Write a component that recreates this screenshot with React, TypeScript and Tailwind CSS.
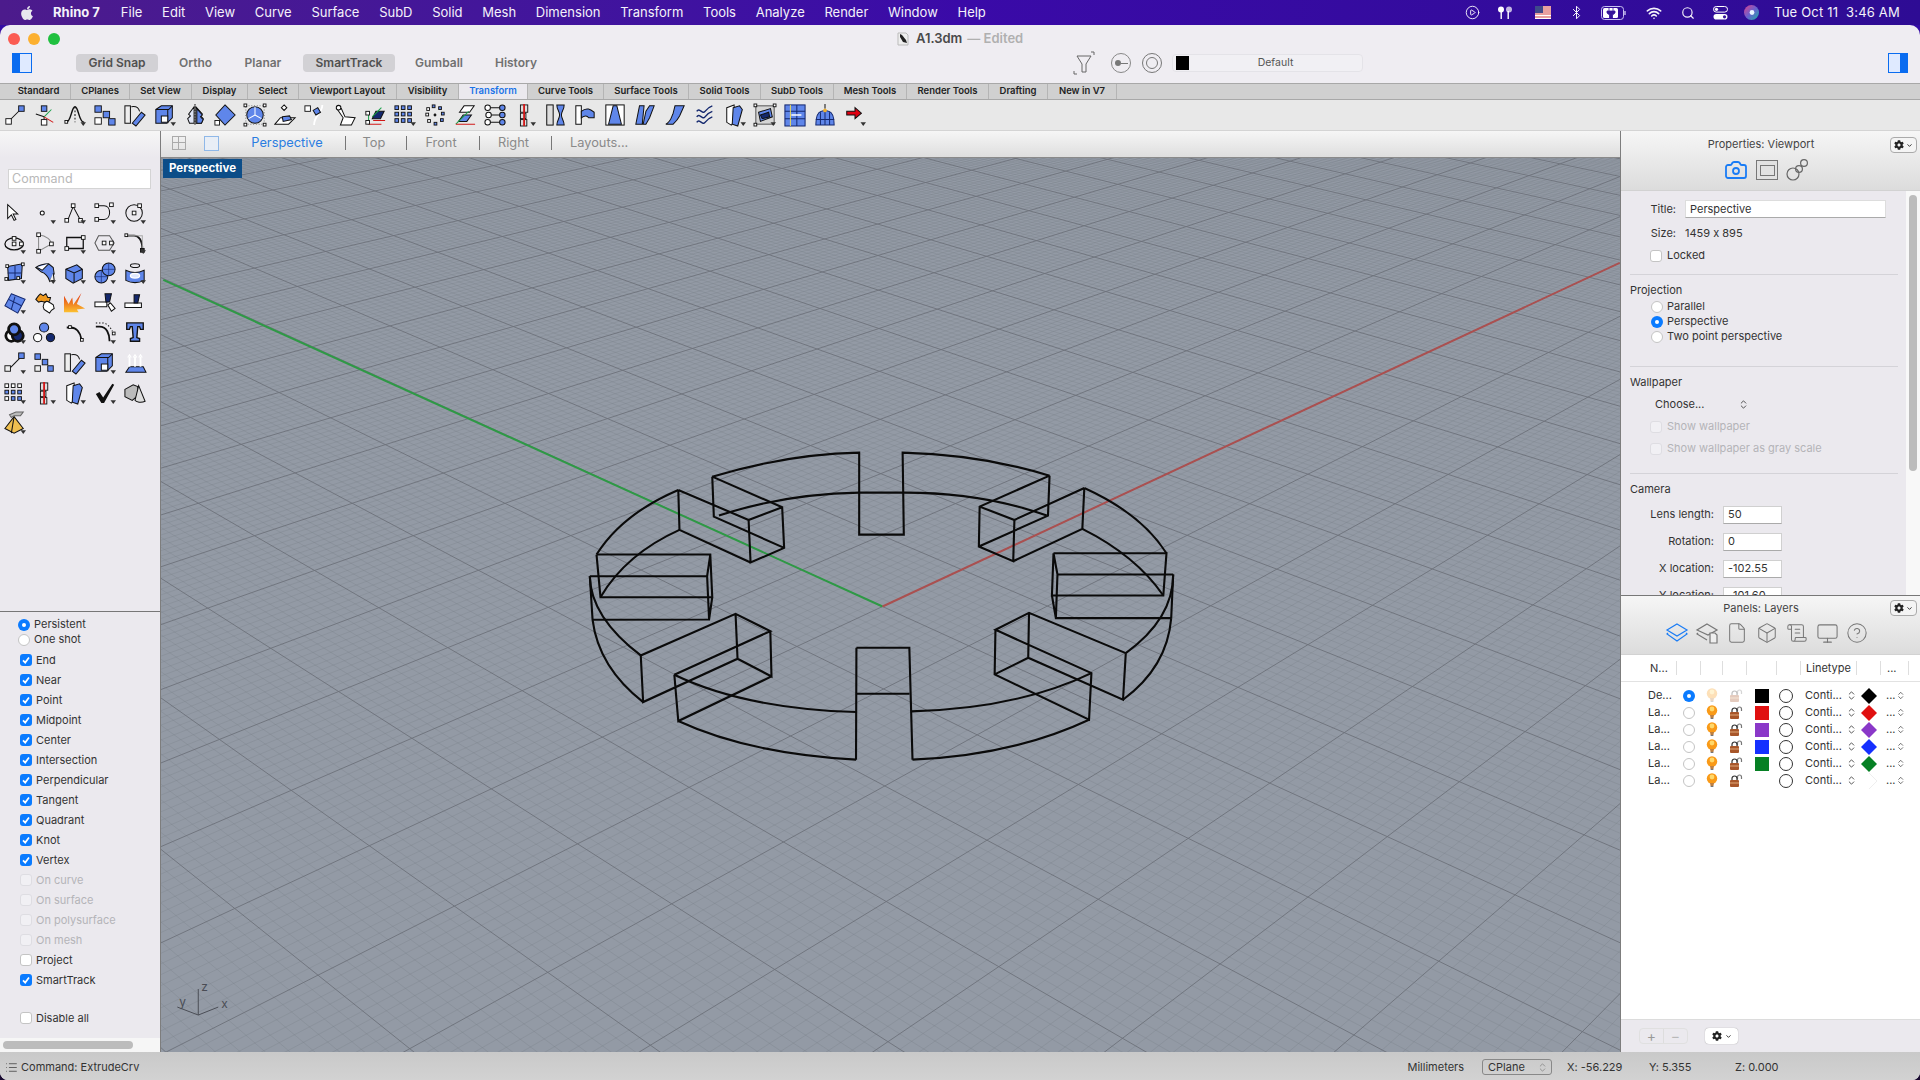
import type { ReactNode } from "react";
import { FaApple, FaCog } from "react-icons/fa";
import {
  Bluetooth,
  Box,
  Camera,
  ChevronDown,
  ChevronsUpDown,
  CircleHelp,
  CirclePlay,
  File,
  List,
  Monitor,
  ScrollText,
  Search,
  Wifi,
} from "lucide-react";

const K = "#111";
const BL = "#5f86ea";
const DK = "#14286e";

function Sq({ x, y, s = 5, f = "#fff" }: { x: number; y: number; s?: number; f?: string }) {
  return <rect x={x} y={y} width={s} height={s} fill={f} stroke={K} strokeWidth={1} />;
}
const Fly = () => <path d="M18 20h6l-3 4z" fill="#333" stroke="none" />;

function Ic({ children, fly }: { children: ReactNode; fly?: boolean }) {
  return (
    <svg width={22} height={22} viewBox="0 0 24 24" fill="none" stroke={K} strokeWidth={1.1} className="overflow-visible">
      {children}
      {fly && <Fly />}
    </svg>
  );
}

const topIcons: [ReactNode, boolean?][] = [
  [<><path d="M6 18 18 6" /><Sq x={2} y={16} s={6} /><Sq x={16} y={2} s={6} f={BL} /></>],
  [<><path d="M11 14 2 11M11 14v6" /><path d="M11 14 19 6" stroke="#18a048" /><path d="M11 14 21 20" stroke="#d01818" /><Sq x={8} y={2} s={6} f={BL} /><Sq x={8} y={17} s={6} /></>],
  [<><path d="M2 20C8 20 8 3 12 3s4 17 10 17" strokeWidth={1.6} /><path d="M12 3v17" strokeDasharray="2 2" /><Sq x={1} y={18} s={3} /><Fly /></>],
  [<><Sq x={1} y={2} s={7} f={BL} /><Sq x={1} y={15} s={7} /><Sq x={10} y={8} s={7} f={BL} /><Sq x={16} y={16} s={7} f={BL} /></>],
  [<><rect x={1} y={2} width={6} height={19} fill="#eee" /><path d="M8 3c6-1 8 1 9 5" /><path d="m9 21 10-12 4 3-10 12z" fill={BL} /></>],
  [<><path d="M2 6 8 2h12v13l-6 6H2z" fill={BL} /><path d="M2 6h14l4-4M15 6v15" /><path d="M8 13h7v7H8z" fill="#fff" /></>, true],
  [<><path d="M11 3 5 11l2 2-3 3 2 5h5zM13 3l7 8-2 2 3 3-2 5h-6z" fill="#dfe5f5" /><path d="M14 5l6 7-2 2 3 3-2 4h-5z" fill={BL} /><path d="M12 0v24" strokeDasharray="1.5 1.5" /></>],
  [<><path d="M12 1 23 12 12 23 2 12z" fill={BL} /><Sq x={1} y={18} s={5} /></>],
  [<><circle cx={12} cy={12} r={9} fill={BL} /><path d="M12 12V3M12 12l-7 4M12 12l7 4" stroke="#fff" /><rect x={2} y={2} width={20} height={20} strokeDasharray="1 2" stroke="#777" /><Sq x={0} y={0} s={3} /><Sq x={21} y={0} s={3} /><Sq x={0} y={21} s={3} /><Sq x={21} y={21} s={3} /></>],
  [<><path d="m11 1 3 3-3 3-3-3z" fill="#fff" /><path d="M1 22 7 15h16l-7 7z" fill="#fff" /><path d="m9 14 8-1 2 4-9 2z" fill={BL} /></>],
  [<><path d="M20 1c0 9-9 11-9 22" stroke="#fff" strokeWidth={2} /><Sq x={1} y={2} s={6} /><path d="m10 7 5-3 3 5-5 3z" fill={BL} /></>],
  [<><path d="M3 5h5l4 9 11 1-4 8H7l3-8z" fill="#fff" /><circle cx={5} cy={4} r={2.5} fill="#fff" /></>],
  [<><path d="M5 22V8" stroke="#18a048" /><path d="M5 22h14" stroke="#d01818" /><path d="m9 16 4-8h9l-4 8z" fill={DK} /><path d="M9 14 19 4" stroke="#18a048" /><path d="M10 18h13" stroke="#d01818" /><Sq x={2} y={8} s={4} /><Sq x={2} y={18} s={4} /></>],
  [<><Sq x={1} y={2} s={4} f={BL} /><Sq x={8} y={2} s={4} f={BL} /><Sq x={15} y={2} s={4} f={BL} /><Sq x={1} y={9} s={4} f={BL} /><Sq x={8} y={9} s={4} f={BL} /><Sq x={15} y={9} s={4} f={BL} /><Sq x={1} y={16} s={4} f={BL} /><Sq x={8} y={16} s={4} f={BL} /><Sq x={15} y={16} s={4} f={BL} /></>, true],
  [<><Sq x={2} y={10} s={3} /><Sq x={19} y={9} s={3} f={BL} /><Sq x={9} y={1} s={3} f={BL} /><Sq x={16} y={3} s={3} f={BL} /><Sq x={3} y={4} s={3} /><Sq x={4} y={17} s={3} /><Sq x={11} y={20} s={3} f={BL} /><Sq x={18} y={16} s={3} f={BL} /><circle cx={12} cy={12} r={1} fill={K} /></>],
  [<><path d="m6 9 5-7h11l-5 7z" fill="#fff" /><path d="m5 19 5-7h9l-5 7z" fill={BL} /><path d="M2 22 16 8" stroke="#18a048" /><path d="M2 22h21" stroke="#d01818" /></>],
  [<><circle cx={4} cy={4} r={3} fill="#fff" /><circle cx={20} cy={4} r={3} fill={BL} /><circle cx={5} cy={12} r={3} fill="#fff" /><circle cx={20} cy={12} r={3} fill={BL} /><circle cx={4} cy={20} r={3} fill="#fff" /><circle cx={20} cy={20} r={3} fill={BL} /><path d="M7 4h10M8 12h9M7 20h10" /></>],
  [<><Sq x={7} y={1} s={8} f="#ddd" /><Sq x={7} y={10} s={6} f="#ddd" /><Sq x={7} y={17} s={7} f="#ddd" /><path d="M11 0v24" stroke="#d01818" strokeWidth={2} /></>, true],
  [<><rect x={3} y={1} width={7} height={22} fill="#ddd" /><path d="M14 1h8c0 5-3 7-3 11s3 6 3 11h-8c0-5 3-7 3-11s-3-6-3-11z" fill={BL} /></>],
  [<><path d="M2 2h6v20H2z" fill="#fff" /><path d="M8 8c6-5 10-2 14 1v6h-6c-2-3-5-2-8 0z" fill={BL} /></>],
  [<><rect x={2} y={1} width={20} height={22} fill="#fff" /><path d="M10 2h4l5 20H5z" fill={BL} /></>],
  [<><path d="M6 2h5l-2 20H2zM13 8l4-6h5l-5 13-4 7h-3z" fill={BL} /></>],
  [<><path d="M2 22c6-3 6-8 8-12l2-8h10l-5 11c-2 4-5 7-7 9z" fill={BL} /></>],
  [<><path d="M3 8c3-5 6 4 9 0s5-5 8-6M3 14c3-5 6 4 9 0s5-5 8-6M3 20c3-5 6 4 9 0s5-5 8-6" strokeWidth={1.6} stroke={DK} /></>],
  [<><path d="m3 4 8-3 1 17-4 5-5-3z" fill="#fff" /><path d="m10 4 7-2 3 4-5 18-6-2z" fill={BL} /></>, true],
  [<><rect x={2} y={2} width={20} height={20} stroke="#555" fill="#d5d5d5" /><path d="m5 9 13-4 2 9-13 5z" fill={BL} /><path d="m7 12 9-3 1 5-8 2z" fill={DK} /><Sq x={0} y={0} s={3} /><Sq x={21} y={0} s={3} /><Sq x={0} y={21} s={3} /></>, true],
  [<><rect x={1} y={1} width={22} height={23} fill={BL} stroke={DK} /><path d="M1 8h22M1 16h22M14 1v23" stroke={DK} /><path d="M7 1v23" stroke="#f5e050" strokeWidth={1} /><path d="M19 12H8" stroke="#fff" strokeWidth={1.6} /></>],
  [<><path d="M2 23c0-9 2-14 6-15 2-1 6-1 8 0 4 1 6 6 6 15z" fill={BL} stroke={DK} /><path d="M2 17h20M7 9v14M12 8v15M17 9v14" stroke={DK} /><circle cx={12} cy={7} r={2} fill="#f0b030" stroke="none" /><path d="M12 5V0" /></>],
  [<><path d="M3 8h9V4l7 6-7 6v-4H3z" fill="#e00010" stroke={K} /></>, true],
];

const leftIcons: [ReactNode, boolean?][] = [
  [<path d="M4 3v15l4-4 3 6 2-1-3-6h5z" fill="#fff" />],
  [<><circle cx={9} cy={12} r={2.2} fill="#fff" /><Fly /></>],
  [<><path d="M4 20 10 5l8 15" /><Sq x={8} y={2} s={4} /><Sq x={1} y={18} s={4} /><Sq x={16} y={18} s={4} /><Fly /></>],
  [<><path d="M4 4h7c8 0 8 15 0 15H4" /><Sq x={1} y={2} s={4} /><Sq x={1} y={17} s={4} /><Sq x={17} y={1} s={4} /><Fly /></>],
  [<><circle cx={11} cy={12} r={9} /><Sq x={9} y={10} s={4} /><Sq x={15} y={2} s={4} /><Fly /></>],
  [<><ellipse cx={11} cy={13} rx={10} ry={6.5} strokeWidth={1.4} /><Sq x={9} y={5} s={4} /><Sq x={9} y={11} s={4} /><Sq x={17} y={11} s={4} /><Fly /></>],
  [<><path d="M5 3c9 1 14 6 14 10L5 21z" stroke="#888" /><Sq x={3} y={1} s={4} /><Sq x={3} y={19} s={4} /><Sq x={17} y={11} s={4} /><Fly /></>],
  [<><path d="M3 6h18v12H3z" strokeWidth={1.4} /><Sq x={1} y={16} s={4} /><Sq x={19} y={4} s={4} /><Fly /></>],
  [<><path d="m5 4h12l5 8-5 8H5l-4-8z" stroke="#555" /><Sq x={9} y={10} s={4} /><Sq x={17} y={10} s={4} /><Fly /></>],
  [<><path d="M2 4h9c5 0 9 5 9 15" strokeWidth={2} /><path d="M2 4h18v15" stroke="#aaa" /><Sq x={1} y={2} s={3} /><Sq x={18} y={18} s={4} f="#333" /><Fly /></>],
  [<><path d="M4 5 20 2l-1 16-14 2z" fill={BL} /><path d="M12 4v15M4 12h15" stroke={DK} /><Sq x={2} y={3} s={3} /><Sq x={19} y={1} s={3} /><Sq x={1} y={17} s={3} /><Sq x={14} y={16} s={3} /><Fly /></>],
  [<><path d="M2 6c6-4 10-4 14-4l5 4 1 7-5 8c-1-5-5-9-9-10z" fill={BL} /><path d="M2 6c3 0 5 2 7 3l7-7" fill="#fff" /><path d="M17 21l5-1-1-8" fill="#eee" /><Fly /></>],
  [<><path d="M2 8 14 3l6 5v10l-10 5-8-5z" fill={BL} /><path d="m2 8 9 4 9-4M11 12v11" /><Fly /></>],
  [<><circle cx={8} cy={16} r={7} fill={BL} /><circle cx={16} cy={8} r={7} fill={BL} /><path d="M1 16h14M8 9v14M9 8h14M16 1v14" stroke={DK} strokeWidth={0.7} /><Fly /></>],
  [<><ellipse cx={12} cy={4} rx={5} ry={2} /><path d="M2 9c6 3 14 3 20 0v11c-6 3-14 3-20 0z" fill={BL} /><ellipse cx={12} cy={15} rx={5} ry={2.5} fill="#dfe8ff" stroke="#fff" strokeWidth={1.4} /><Fly /></>],
  [<><path d="M8 2 23 8l-8 15L1 15z" fill={BL} stroke={DK} /><path d="M5 8l14 7M12 5 8 19" stroke={DK} /><Fly /></>],
  [<><path d="M2 8 5 4l2-2 3 2 3-2 2 4 3 0-1 4-6 1-3-1-3 1z" fill="#f09a20" /><path d="M11 12l3-2 4 2 3 2 1 4-3 2-2 3-3-2-3-2-1-3z" fill="#fff" /></>],
  [<><path d="M0 22V4l5 9 4-7 1 8 9-13-5 12 9 5-9 1 2 3z" fill="url(#flame)" stroke="none" /><defs><linearGradient id="flame" x1="0" y1="0" x2="0" y2="1"><stop offset="0" stopColor="#e03010" /><stop offset="1" stopColor="#fcc030" /></linearGradient></defs></>],
  [<><path d="M1 11h13v5H1z" fill="#fff" /><path d="M12 2h7l-2 9h-4z" fill={DK} /><path d="m15 14 3-2 5 6-4 3z" fill="#fff" /></>],
  [<><path d="M1 12h18v5H1z" fill="#fff" /><path d="M11 3h6l-2 9h-4z" fill={DK} /></>],
  [<><circle cx={8} cy={15} r={6} fill="#fff" strokeWidth={3} /><circle cx={15} cy={15} r={6} fill={DK} strokeWidth={3} /><circle cx={11} cy={8} r={6} fill={BL} strokeWidth={3} /><Fly /></>],
  [<><circle cx={11} cy={6} r={5} fill={BL} /><circle cx={4} cy={17} r={4.5} fill="#fff" /><circle cx={18} cy={17} r={4.5} fill={DK} /></>],
  [<><path d="M3 6h4c7 0 11 6 12 13" strokeWidth={2} /><Sq x={5} y={4} s={3} /><Sq x={18} y={18} s={3} /></>],
  [<><path d="M2 5h4c8 0 11 8 11 16" strokeWidth={2} /><path d="M2 1h8c5 1 8 5 10 9" strokeDasharray="1.5 2" /><Sq x={20} y={11} s={3} /><Fly /></>],
  [<><path d="M3 1h18v7h-3l-1-3h-2l-1 12 3 1v3H7v-3l3-1L9 5H7L6 8H3z" fill={BL} stroke={K} strokeWidth={1.5} /></>],
  [<><path d="M7 17 17 7" /><Sq x={1} y={15} s={6} f="#eee" /><Sq x={16} y={1} s={6} f={BL} /><Fly /></>],
  [<><Sq x={1} y={2} s={6} f={BL} /><Sq x={1} y={15} s={6} f="#eee" /><Sq x={9} y={8} s={6} f={BL} /><Sq x={15} y={15} s={6} f={BL} /></>],
  [<><rect x={1} y={2} width={6} height={19} fill="#eee" /><path d="M8 3c6-1 8 1 9 5" /><path d="m9 21 10-12 4 3-10 12z" fill={BL} /></>],
  [<><path d="M2 6 8 2h12v13l-6 6H2z" fill={BL} /><path d="M2 6h14l4-4M15 6v15" /><path d="M8 13h7v7H8z" fill="#fff" /><Fly /></>],
  [<><path d="M2 22 6 16h15l3 6z" fill={BL} /><path d="M6 16V5M12 16V5M18 16V5" stroke="#fff" strokeWidth={2} /><path d="m4 6 2-3 2 3M10 6l2-3 2 3M16 6l2-3 2 3" stroke="#fff" /></>],
  [<><Sq x={1} y={2} s={4} /><Sq x={8} y={2} s={4} /><Sq x={15} y={2} s={4} /><Sq x={1} y={9} s={4} f={BL} /><Sq x={8} y={9} s={4} f={BL} /><Sq x={15} y={9} s={4} f={BL} /><Sq x={1} y={16} s={4} /><Sq x={8} y={16} s={4} f={BL} /><Sq x={15} y={16} s={4} f={BL} /><Fly /></>],
  [<><Sq x={7} y={1} s={8} f="#ddd" /><Sq x={7} y={10} s={6} f="#ddd" /><Sq x={7} y={17} s={7} f="#ddd" /><path d="M11 0v24" stroke="#d01818" strokeWidth={2} /><Fly /></>],
  [<><path d="m3 4 8-3 1 17-4 5-5-3z" fill="#fff" /><path d="m10 4 7-2 3 4-5 18-6-2z" fill={BL} /><Fly /></>],
  [<><path d="M2 13 6 11l4 6L20 2l2 1-11 20H8z" fill={K} stroke="none" /><Fly /></>],
  [<><path d="M1 8 10 3l5 2v10l-6 5-8-4z" fill="#bbb" /><path d="m16 4 7 17c-4 2-10 1-11-1z" fill="#ddd" /></>],
  [<><path d="M1 18 11 5l10 13-10 5z" fill="#f0c050" /><path d="m11 5-3 18" /><path d="M6 3 13 0h8l-3 4h-7l-3 2z" fill="#bbb" stroke="#666" /><Fly /></>],
];

// Tabs of the command bar, widths read from the reference
const tabs: [string, string][] = [
  ["Standard", "w-[64px]"],
  ["CPlanes", "w-[59px]"],
  ["Set View", "w-[62px]"],
  ["Display", "w-[56px]"],
  ["Select", "w-[51px]"],
  ["Viewport Layout", "w-[98px]"],
  ["Visibility", "w-[62px]"],
  ["Transform", "w-[69px]"],
  ["Curve Tools", "w-[76px]"],
  ["Surface Tools", "w-[85px]"],
  ["Solid Tools", "w-[72px]"],
  ["SubD Tools", "w-[73px]"],
  ["Mesh Tools", "w-[73px]"],
  ["Render Tools", "w-[82px]"],
  ["Drafting", "w-[59px]"],
  ["New in V7", "w-[69px]"],
];

const menus = ["File", "Edit", "View", "Curve", "Surface", "SubD", "Solid", "Mesh", "Dimension", "Transform", "Tools", "Analyze", "Render", "Window", "Help"];

const snaps: [string, "on" | "off" | "dis"][] = [
  ["End", "on"],
  ["Near", "on"],
  ["Point", "on"],
  ["Midpoint", "on"],
  ["Center", "on"],
  ["Intersection", "on"],
  ["Perpendicular", "on"],
  ["Tangent", "on"],
  ["Quadrant", "on"],
  ["Knot", "on"],
  ["Vertex", "on"],
  ["On curve", "dis"],
  ["On surface", "dis"],
  ["On polysurface", "dis"],
  ["On mesh", "dis"],
  ["Project", "off"],
  ["SmartTrack", "on"],
];

const layers = [
  { name: "De...", color: "#000000", cur: true },
  { name: "La...", color: "#e01010" },
  { name: "La...", color: "#8a38c8" },
  { name: "La...", color: "#1530ff" },
  { name: "La...", color: "#068024" },
  { name: "La...", color: "" },
];

function Check({ state }: { state: "on" | "off" | "dis" }) {
  if (state === "on")
    return (
      <span className="flex h-3 w-3 shrink-0 items-center justify-center rounded-[3px] bg-[#0a7bff]">
        <svg width={10} height={10} viewBox="0 0 10 10" fill="none" stroke="#fff" strokeWidth={1.7}>
          <path d="M2 5.4 4.2 7.6 8 2.6" />
        </svg>
      </span>
    );
  return (
    <span
      className={
        state === "off"
          ? "h-3 w-3 shrink-0 rounded-[3px] border border-[#c4c4c4] bg-white"
          : "h-3 w-3 shrink-0 rounded-[3px] border border-[#dedde2] bg-[#f1f0f4]"
      }
    />
  );
}

function Radio({ on }: { on?: boolean }) {
  return on ? (
    <span className="flex h-3 w-3 shrink-0 items-center justify-center rounded-full bg-[#0a7bff]">
      <span className="h-1 w-1 rounded-full bg-white" />
    </span>
  ) : (
    <span className="h-3 w-3 shrink-0 rounded-full border border-[#c4c4c4] bg-white" />
  );
}

function GearButton() {
  return (
    <button className="flex h-4 w-[27px] items-center justify-center gap-[2px] rounded-[4px] border border-[#aaa] bg-[#f4f4f4] text-[#222]">
      <FaCog size={10} />
      <ChevronDown size={7} strokeWidth={3} />
    </button>
  );
}

function SidebarToggle({ right }: { right?: boolean }) {
  return (
    <span className="flex h-5 w-5 border border-[#0a6cf0] bg-[#dfeaff]">
      {!right && <span className="w-[7px] bg-[#0a6cf0]" />}
      <span className="flex-1" />
      {right && <span className="w-[7px] bg-[#0a6cf0]" />}
    </span>
  );
}

function Bulb({ dim }: { dim?: boolean }) {
  return (
    <svg width={14} height={15} viewBox="0 0 14 15" className={dim ? "opacity-30" : ""}>
      <circle cx={7} cy={5.5} r={5.2} fill="#f99a18" />
      <circle cx={7} cy={4} r={2.4} fill="#ffd86a" />
      <path d="M5 10h4l-.6 3H5.6z" fill="#c08040" />
      <path d="M5.6 13.4h2.8" stroke="#666" />
    </svg>
  );
}

function Lock({ dim }: { dim?: boolean }) {
  return (
    <svg width={14} height={14} viewBox="0 0 14 14" fill="none" className={dim ? "opacity-30" : ""}>
      <path d="M8.5 5.5V3a2 2 0 0 1 4 0v2" stroke="#777" strokeWidth={1.2} />
      <rect x={1} y={6} width={9} height={7} rx={1} fill="#a8562a" />
      <path d="M1 9h9" stroke="#e0a878" />
      <path d="M3 6V4.5a2.5 2.5 0 0 1 5 0V6" stroke="#333" strokeWidth={1.2} />
    </svg>
  );
}

function Updown({ className = "text-[#333]" }: { className?: string }) {
  return <ChevronsUpDown size={11} strokeWidth={1.8} className={className} />;
}

// Construction plane as a homography: u runs along the red axis, v along the green one.
function gridPaths() {
  const O = [882, 606];
  const VR = [2963, -364];
  const VL = [-1500, -480];
  const a = 0.0396;
  const b = 0.035;
  const P = (u: number, v: number) => {
    const p = a * u;
    const q = b * v;
    const w = 1 + p + q;
    return `${((O[0] + p * VR[0] + q * VL[0]) / w).toFixed(1)} ${((O[1] + p * VR[1] + q * VL[1]) / w).toFixed(1)}`;
  };
  let minor = "";
  let major = "";
  for (let i = -200; i <= 400; i++) {
    const t = i / 10;
    const uMin = Math.max(-20, (0.1 - 1 - b * t) / a);
    const vMin = Math.max(-20, (0.1 - 1 - a * t) / b);
    const seg = `M${P(uMin, t)}L${P(40, t)}M${P(t, vMin)}L${P(t, 40)}`;
    if (i % 10 === 0) major += seg;
    else minor += seg;
  }
  return { minor, major };
}

const grid = gridPaths();

const wire = [
  "M358 138Q550 70 730 66L730 312L843 312L840 66Q1040 72 1212 135",
  "M375 255Q540 190 730 186L840 186Q1040 185 1205 255",
  "M358 138L535 230L540 352L455 396L450 268L535 230M358 138L362 258L540 352M272 178L450 268M272 178L275 298L455 396",
  "M272 178Q130 250 65 372M275 298Q140 370 75 500",
  "M1212 135L1035 228L1033 348L1120 392L1123 268L1035 228M1212 135L1208 255L1033 348M1300 172L1123 268M1300 172L1295 295L1120 392",
  "M1300 172Q1445 250 1508 368M1295 295Q1430 375 1500 495",
  "M1222 368L1508 368L1500 495L1218 495L1222 368L1232 432L1525 432M1218 495L1228 563L1520 563M1232 432L1228 563M1525 432L1520 563",
  "M1525 432Q1525 565 1405 668M1520 563Q1510 710 1398 808",
  "M1405 668L1160 547L1075 598L1318 728L1312 868L1073 732L1075 598M1160 547L1158 682L1398 808L1405 668M1073 732L1158 682",
  "M1318 728Q1130 835 862 843M1312 868Q1120 975 865 988",
  "M723 652L857 652L865 988M723 652L722 988M723 790L857 790",
  "M722 845Q440 835 262 733M722 988Q450 970 272 872",
  "M262 733L505 602L417 550L177 675L183 815L422 685L417 550M422 685L508 738L505 602M508 738L272 872L262 733",
  "M177 675Q50 560 48 437M183 815Q70 710 55 568",
  "M65 372L353 372L358 500L75 500L65 372M48 437L345 437L353 372M358 500L350 567L55 568M345 437L350 567M48 437L55 568",
];

function Viewport() {
  return (
    <div className="relative min-h-0 flex-1 overflow-hidden bg-[#939aa5]">
      <svg className="absolute inset-0 h-full w-full" viewBox="160 157 1460 895" fill="none">
        <path d={grid.minor} stroke="#747b85" strokeWidth={0.6} strokeOpacity={0.45} />
        <path d={grid.major} stroke="#6d727b" strokeWidth={0.9} />
        <path d="M162 279 882 606" stroke="#2e9945" strokeWidth={2} />
        <path d="M882 606 1620 262" stroke="#aa5050" strokeWidth={2} />
        <svg x={570} y={430} width={620} height={340} viewBox="0 0 1568 1020" preserveAspectRatio="none" overflow="visible">
          {wire.map((d, i) => (
            <path key={i} d={d} stroke="#0a0a0a" strokeWidth={2.1} vectorEffect="non-scaling-stroke" />
          ))}
        </svg>
        <path d="M197 989V1015M197 1015 217 1007M197 1015 176 1007" stroke="#4a4d55" strokeWidth={1} />
        <text x={200} y={991} fill="#4a4d55" fontSize={12} fontFamily="Inter, sans-serif">z</text>
        <text x={220} y={1008} fill="#4a4d55" fontSize={12} fontFamily="Inter, sans-serif">x</text>
        <text x={178} y={1006} fill="#4a4d55" fontSize={12} fontFamily="Inter, sans-serif">y</text>
      </svg>
      <div className="absolute left-[2px] top-px flex h-[19px] w-[79px] items-center justify-center bg-[#0c4d88] text-[11.5px] font-bold text-white">
        Perspective
      </div>
    </div>
  );
}

function ViewTabs() {
  const sep = <span className="h-[14px] w-px bg-[#777]" />;
  return (
    <div className="flex h-[27px] shrink-0 items-center border-b border-[#8a8a8a] bg-gradient-to-b from-[#f6f6f6] to-[#dedede] pb-[2px] text-[12.8px] text-[#8a8a8a]">
      <span className="ml-[11px] flex h-[14px] w-[14px] flex-wrap border border-[#aaa]">
        <span className="h-1/2 w-1/2 border-b border-r border-[#aaa]" />
        <span className="h-1/2 w-1/2 border-b border-[#aaa]" />
        <span className="h-1/2 w-1/2 border-r border-[#aaa]" />
      </span>
      <span className="ml-[18px] h-[15px] w-[15px] border border-[#8fb8e8] bg-[#e8eef6]" />
      <span className="ml-[14px]">{sep}</span>
      <span className="flex w-[112px] justify-center pr-[4px] text-[#2a7de1]">Perspective</span>
      {sep}
      <span className="flex w-[60px] justify-center pr-[4px]">Top</span>
      {sep}
      <span className="flex w-[72px] justify-center pr-[4px]">Front</span>
      {sep}
      <span className="flex w-[71px] justify-center pr-[4px]">Right</span>
      {sep}
      <span className="ml-[18px]">Layouts...</span>
    </div>
  );
}

function LeftPanel() {
  return (
    <aside className="flex w-[161px] shrink-0 flex-col border-r border-[#7d7d7d] bg-[#ebe9ee] text-[11px] text-[#333]">
      <div className="h-[27px] shrink-0 bg-gradient-to-b from-[#f6f6f6] to-[#ebe9ee]" />
      <div className="mx-2 mt-[11px] flex h-5 w-[143px] shrink-0 items-center border border-[#d4d4d4] bg-white pl-[3px] text-[12.5px] text-[#b8b8b8]">
        Command
      </div>
      <div className="mt-[9px] grid shrink-0 grid-cols-[repeat(5,30px)] auto-rows-[30px]">
        {leftIcons.map(([icon], i) => (
          <div key={i} className="flex items-center justify-center">
            <Ic>{icon}</Ic>
          </div>
        ))}
      </div>
      <div className="flex-1" />
      <div className="h-[427px] shrink-0 border-t border-[#777] pl-[18px] pt-[5px]">
        <div className="flex h-[15px] items-center gap-[4px]">
          <Radio on />
          <span>Persistent</span>
        </div>
        <div className="flex h-[15px] items-center gap-[4px]">
          <Radio />
          <span>One shot</span>
        </div>
        <div className="ml-[2px] mt-[3px]">
          {snaps.map(([name, state]) => (
            <div key={name} className="flex h-5 items-center gap-[4px]">
              <Check state={state} />
              <span className={state === "dis" ? "text-[#b4b4b8]" : ""}>{name}</span>
            </div>
          ))}
          <div className="mt-[18px] flex h-5 items-center gap-[4px]">
            <Check state="off" />
            <span>Disable all</span>
          </div>
        </div>
      </div>
      <div className="flex h-[14px] shrink-0 items-center bg-[#f6f6f6] pl-[3px]">
        <span className="h-2 w-[130px] rounded-full bg-[#bcbcbc]" />
      </div>
    </aside>
  );
}

function Field({ label, value, labelW = "w-[93px]" }: { label: string; value: string; labelW?: string }) {
  return (
    <div className="flex h-[27px] items-center">
      <span className={`${labelW} text-right`}>{label}</span>
      <span className="ml-[9px] flex h-[18px] w-[59px] items-center border border-[#d0d0d0] border-b-[#aaa] bg-white pl-1">{value}</span>
    </div>
  );
}

function PropertiesPanel() {
  const rule = <div className="ml-[9px] h-px w-[268px] bg-[#d4d3d8]" />;
  return (
    <div className="flex h-[465px] shrink-0 flex-col overflow-hidden border-b border-[#777]">
      <div className="relative flex h-[60px] shrink-0 flex-col items-center border-b border-[#d2d2d2] bg-gradient-to-b from-[#f6f6f6] to-[#dcdcdc]">
        <span className="mr-[19px] mt-[6px] h-[15px] text-[11px] leading-[15px] text-[#444]">Properties: Viewport</span>
        <div className="absolute right-[3px] top-[6px]">
          <GearButton />
        </div>
        <div className="mr-[9px] mt-[7px] flex h-[22px] items-center gap-[8px]">
          <Camera size={24} strokeWidth={1.8} className="text-[#1a7cf5]" />
          <span className="flex h-5 w-[22px] items-center justify-center border border-[#777] bg-[#e2e2e2]">
            <span className="h-[11px] w-[15px] border border-[#777]" />
          </span>
          <svg width={22} height={22} viewBox="0 0 22 22" fill="none" stroke="#666" strokeWidth={1.2}>
            <circle cx={7} cy={15} r={6} />
            <circle cx={13} cy={10} r={3.4} />
            <circle cx={18} cy={4} r={3.4} />
          </svg>
        </div>
      </div>
      <div className="flex min-h-0 flex-1">
        <div className="min-h-0 flex-1 overflow-hidden bg-[#ebe9ee] text-[11px] text-[#333]">
          <div className="mt-[9px] flex h-[18px] items-center">
            <span className="w-[55px] text-right">Title:</span>
            <span className="ml-[9px] flex h-[18px] w-[201px] items-center border border-[#ddd] border-b-[#aaa] bg-white pl-1">Perspective</span>
          </div>
          <div className="mt-[8px] flex h-[15px] items-center">
            <span className="w-[55px] text-right">Size:</span>
            <span className="ml-[9px]">1459 x 895</span>
          </div>
          <div className="ml-[29px] mt-[7px] flex h-[15px] items-center gap-[5px]">
            <Check state="off" />
            <span>Locked</span>
          </div>
          <div className="mt-[11px]">{rule}</div>
          <div className="ml-[9px] mt-[8px] h-[15px] leading-[15px]">Projection</div>
          <div className="ml-[30px] mt-[1px]">
            <div className="flex h-[15px] items-center gap-[4px]"><Radio /><span>Parallel</span></div>
            <div className="flex h-[15px] items-center gap-[4px]"><Radio on /><span>Perspective</span></div>
            <div className="flex h-[15px] items-center gap-[4px]"><Radio /><span>Two point perspective</span></div>
          </div>
          <div className="mt-[22px]">{rule}</div>
          <div className="ml-[9px] mt-[8px] h-[15px] leading-[15px]">Wallpaper</div>
          <div className="ml-[34px] mt-[7px] flex h-[15px] w-[94px] items-center justify-between">
            <span>Choose...</span>
            <Updown />
          </div>
          <div className="ml-[29px] mt-[7px] flex h-[15px] items-center gap-[5px] text-[#b4b4b8]">
            <Check state="dis" />
            <span>Show wallpaper</span>
          </div>
          <div className="ml-[29px] mt-[7px] flex h-[15px] items-center gap-[5px] text-[#b4b4b8]">
            <Check state="dis" />
            <span>Show wallpaper as gray scale</span>
          </div>
          <div className="mt-[17px]">{rule}</div>
          <div className="ml-[9px] mt-[8px] h-[15px] leading-[15px]">Camera</div>
          <div className="mt-[4px]">
            <Field label="Lens length:" value="50" />
            <Field label="Rotation:" value="0" />
            <Field label="X location:" value="-102.55" />
            <Field label="Y location:" value="-101.60" />
          </div>
        </div>
        <div className="w-[14px] shrink-0 bg-[#f8f8f8] pl-[3px] pt-[4px]">
          <div className="h-[276px] w-2 rounded-full bg-[#bcbcbc]" />
        </div>
      </div>
    </div>
  );
}

function LayersPanel() {
  const head = ["N...", "", "", "", "", "", "Linetype", "", "..."];
  const widths = ["w-[56px] pl-[29px]", "w-[24px]", "w-[22px]", "w-[24px]", "w-[30px]", "w-[24px]", "w-[56px] pl-[5px]", "w-[24px]", "w-[28px] pl-[6px]"];
  return (
    <div className="flex min-h-0 flex-1 flex-col">
      <div className="relative flex h-[59px] shrink-0 flex-col items-center border-b border-[#d2d2d2] bg-gradient-to-b from-[#f6f6f6] to-[#dcdcdc]">
        <span className="mr-[19px] mt-[5px] h-[15px] text-[11px] leading-[15px] text-[#444]">Panels: Layers</span>
        <div className="absolute right-[3px] top-[4px]">
          <GearButton />
        </div>
        <div className="absolute left-[41px] top-[26px] flex h-[24px] text-[#777]">
          <span className="flex w-[30px] justify-center">
            <svg width={24} height={22} viewBox="0 0 24 22" fill="none" stroke="#1a7cf5" strokeWidth={1.2}>
              <path d="m12 2 10 6-10 6L2 8z" />
              <path d="m3 11-1 1 10 7 10-7-1-1" />
            </svg>
          </span>
          <span className="flex w-[30px] justify-center">
            <svg width={24} height={22} viewBox="0 0 24 22" fill="none" stroke="#777" strokeWidth={1.2}>
              <path d="m12 2 10 6-9 5L2 8z" />
              <path d="m3 11-1 1 10 6" />
              <path d="M15 11h5l2 2v8h-7z" fill="#eee" />
            </svg>
          </span>
          <span className="flex w-[30px] justify-center"><File size={22} strokeWidth={1.1} /></span>
          <span className="flex w-[30px] justify-center"><Box size={22} strokeWidth={1.1} /></span>
          <span className="flex w-[30px] justify-center"><ScrollText size={22} strokeWidth={1.1} /></span>
          <span className="flex w-[30px] justify-center"><Monitor size={23} strokeWidth={1.1} /></span>
          <span className="flex w-[30px] justify-center"><CircleHelp size={22} strokeWidth={1.1} /></span>
        </div>
      </div>
      <div className="min-h-0 flex-1 bg-white text-[11px] text-[#333]">
        <div className="flex h-[27px] items-center border-b border-[#e2e2e2]">
          {head.map((h, i) => (
            <span key={i} className={`${widths[i]} flex h-[14px] shrink-0 items-center border-r border-[#dedede]`}>
              {h}
            </span>
          ))}
        </div>
        <div className="pt-[5px]">
          {layers.map((l, i) => (
            <div key={i} className="flex h-[17px] items-center">
              <span className="w-[56px] shrink-0 pl-[27px]">{l.name}</span>
              <span className="flex w-[24px] shrink-0 justify-center"><Radio on={l.cur} /></span>
              <span className="flex w-[22px] shrink-0 justify-center"><Bulb dim={l.cur} /></span>
              <span className="flex w-[24px] shrink-0 justify-center pl-[2px]"><Lock dim={l.cur} /></span>
              <span className="flex w-[30px] shrink-0 justify-center">
                <svg width={14} height={14}>{l.color && <rect width={14} height={14} fill={l.color} />}</svg>
              </span>
              <span className="flex w-[24px] shrink-0 justify-center pr-[6px]">
                <span className="h-[14px] w-[14px] rounded-full border border-[#333] bg-white" />
              </span>
              <span className="flex w-[56px] shrink-0 items-center justify-between pl-[4px]">
                Conti...
                <Updown />
              </span>
              <span className="flex w-[24px] shrink-0 justify-center">
                <svg width={16} height={16} viewBox="0 0 16 16">
                  {l.color ? <path d="m8 0 8 8-8 8-8-8z" fill={l.color} /> : <path d="m8 0 8 8-8 8" fill="none" stroke="#eee" />}
                </svg>
              </span>
              <span className="flex w-[24px] shrink-0 items-center justify-between pl-[5px]">
                ...
                <Updown />
              </span>
            </div>
          ))}
        </div>
      </div>
      <div className="flex h-[33px] shrink-0 items-center border-t border-[#dcdcdc] bg-[#ebe9ee] pl-[18px]">
        <span className="flex h-4 w-[49px] items-center rounded-[4px] border border-[#e0e0e0] text-[14px] text-[#999]">
          <span className="w-[24px] border-r border-[#ddd] text-center leading-[14px]">+</span>
          <span className="flex-1 text-center leading-[14px] text-[#b8b8b8]">−</span>
        </span>
        <span className="ml-[17px] flex h-4 w-[33px] items-center justify-center gap-[3px] rounded-[4px] bg-white text-[#222] shadow-[0_0_1px_#888]">
          <FaCog size={10} />
          <ChevronDown size={7} strokeWidth={3} />
        </span>
      </div>
    </div>
  );
}

function MenuBar() {
  return (
    <div className="flex h-[25px] shrink-0 items-center bg-gradient-to-r from-[#4c1b8c] via-[#3a0aa8] to-[#2e0c94] text-[13px] text-[#f4f2fa]">
      <FaApple size={16} className="ml-[19px] text-[#e8e8ee]" />
      <span className="ml-[18px] font-bold">Rhino 7</span>
      <div className="ml-[21px] flex gap-[19.7px]">
        {menus.map((m) => (
          <span key={m}>{m}</span>
        ))}
      </div>
      <div className="ml-auto flex items-center pr-[20px]">
        <CirclePlay size={15} strokeWidth={1.5} />
        <svg width={18} height={14} viewBox="0 0 18 14" fill="#fff" className="ml-[16px]">
          <circle cx={5} cy={3.5} r={3} />
          <path d="M4.5 5h1.4v8H4.5zM11.5 5h1.4v8h-1.4z" />
          <circle cx={13} cy={3.5} r={3} fillOpacity={0.7} />
        </svg>
        <span className="ml-[21px] flex h-[13px] w-[16px] flex-col justify-between bg-[#e8a0a0]">
          <span className="h-[7px] w-[8px] bg-[#3f4a8a]" />
          <span className="h-px bg-white" />
          <span className="h-px bg-white" />
        </span>
        <Bluetooth size={15} strokeWidth={1.6} className="ml-[18px]" />
        <svg width={26} height={14} viewBox="0 0 26 14" fill="none" className="ml-[17px]">
          <rect x={0.5} y={0.5} width={22} height={13} rx={3} stroke="#c8c0f0" />
          <rect x={2} y={2} width={15} height={10} rx={1.5} fill="#fff" />
          <path d="M24 5v4" stroke="#c8c0f0" strokeWidth={1.4} />
          <path d="M8 2v3M12 2v3M6 5h8v2l-2.5 2v3h-3V9L6 7z" fill="#35159a" stroke="#35159a" strokeWidth={0.8} />
        </svg>
        <Wifi size={16} strokeWidth={2.4} className="ml-[19px]" />
        <Search size={14} strokeWidth={2} className="ml-[19px]" />
        <svg width={15} height={14} viewBox="0 0 15 14" className="ml-[18px]">
          <rect x={0.5} y={0.5} width={14} height={5.6} rx={2.8} fill="none" stroke="#fff" />
          <circle cx={3.5} cy={3.3} r={1.6} fill="#fff" />
          <rect x={0.5} y={8} width={14} height={5.6} rx={2.8} fill="#fff" />
          <circle cx={11.5} cy={10.8} r={1.6} fill="#35159a" />
        </svg>
        <svg width={15} height={15} viewBox="0 0 15 15" className="ml-[16px]">
          <defs>
            <linearGradient id="siri" x1="0" y1="0" x2="1" y2="1">
              <stop offset="0" stopColor="#e0408a" />
              <stop offset="0.5" stopColor="#6a60d0" />
              <stop offset="1" stopColor="#18b0a0" />
            </linearGradient>
          </defs>
          <circle cx={7.5} cy={7.5} r={7.5} fill="url(#siri)" />
          <circle cx={8} cy={7.5} r={2.4} fill="#e8f4ff" />
        </svg>
        <span className="ml-[15px] whitespace-pre tracking-[0.2px]">Tue Oct 11  3:46 AM</span>
      </div>
    </div>
  );
}

function ToolRow() {
  return (
    <div className="flex h-[33px] shrink-0 items-center pb-[7px] text-[12px] font-semibold text-[#717171]">
      <div className="ml-[12px]">
        <SidebarToggle />
      </div>
      <span className="ml-[44px] flex h-[18px] w-[82px] items-center justify-center rounded-[4px] bg-[#d2d1d5] text-[#505050]">Grid Snap</span>
      <span className="flex w-[75px] justify-center">Ortho</span>
      <span className="flex w-[60px] justify-center">Planar</span>
      <span className="ml-[10px] flex h-[18px] w-[92px] items-center justify-center rounded-[4px] bg-[#d2d1d5] text-[#505050]">SmartTrack</span>
      <span className="flex w-[88px] justify-center">Gumball</span>
      <span className="flex w-[66px] justify-center">History</span>
      <div className="ml-[523px] flex items-center">
        <svg width={24} height={24} viewBox="0 0 24 24" fill="none" stroke="#666" strokeWidth={1}>
          <path d="M5 5h14l-5 8v8h-4v-8z" />
          <path d="M19 1h3v3M2 23v-3M2 23h3" />
        </svg>
        <span className="ml-[15px] flex h-5 w-5 items-center justify-center rounded-full border border-[#888]">
          <span className="h-[6px] w-[6px] rounded-full bg-[#777]" />
          <span className="h-px w-[7px] bg-[#777]" />
        </span>
        <span className="ml-[11px] flex h-5 w-5 items-center justify-center rounded-full border border-[#777]">
          <span className="h-3 w-3 rounded-full border border-[#777]" />
        </span>
        <span className="ml-[10px] flex h-[18px] w-[191px] items-center rounded-[4px] border border-[#e4e3e8] bg-[#f1f0f4] pl-[3px] text-[10.5px] font-normal text-[#555]">
          <span className="h-[14px] w-[13px] bg-black" />
          <span className="flex-1 text-center">Default</span>
        </span>
      </div>
      <div className="ml-auto mr-[12px]">
        <SidebarToggle right />
      </div>
    </div>
  );
}

function TabBar() {
  return (
    <div className="flex h-[17px] shrink-0 border-y border-[#a8a8a8] bg-[#d0d0d0] pl-[7px] text-[9.5px] font-semibold text-[#222]">
      {tabs.map(([t, w]) => (
        <span
          key={t}
          className={`${w} flex items-center justify-center border-r border-[#b4b4b4] ${t === "Transform" ? "bg-[#ebe9ee] text-[#1a73e8]" : ""}`}
        >
          {t}
        </span>
      ))}
    </div>
  );
}

export default function App() {
  return (
    <div className="flex h-screen w-screen flex-col overflow-hidden bg-[linear-gradient(to_bottom,#340ca5_50%,#180a30_50%)] [font-family:Inter,sans-serif] [font-feature-settings:'calt'_0]">
      <MenuBar />
      <div className="flex min-h-0 flex-1 flex-col overflow-hidden rounded-b-[8px] rounded-t-[10px] bg-[#efedf2]">
        <div className="flex h-[25px] shrink-0 items-center pt-[2px]">
          <span className="ml-2 h-3 w-3 rounded-full bg-[#fb5b52]" />
          <span className="ml-2 h-3 w-3 rounded-full bg-[#fcb030]" />
          <span className="ml-2 h-3 w-3 rounded-full bg-[#20c040]" />
          <svg width={12} height={14} viewBox="0 0 12 14" className="ml-[837px]">
            <path d="M1 1h8l2 2v10H1z" fill="#eee" stroke="#bbb" />
            <path d="M3 2l2 1 4 5 1 3-4-1-3-5z" fill="#222" />
          </svg>
          <span className="ml-[7px] text-[13px] font-semibold text-[#4a4a4a]">A1.3dm</span>
          <span className="ml-[5px] text-[13px] font-semibold text-[#b0b0b0]">— Edited</span>
        </div>
        <ToolRow />
        <TabBar />
        <div className="flex h-[31px] shrink-0 border-b border-[#d4d4d4] bg-[#e8e8e8]">
          {topIcons.map(([icon, fly], i) => (
            <div key={i} className="flex w-[30px] items-center justify-center">
              <Ic fly={fly}>{icon}</Ic>
            </div>
          ))}
        </div>
        <div className="flex min-h-0 flex-1">
          <LeftPanel />
          <div className="flex min-w-0 flex-1 flex-col">
            <ViewTabs />
            <Viewport />
          </div>
          <aside className="flex w-[300px] shrink-0 flex-col border-l border-[#7d7d7d]">
            <PropertiesPanel />
            <LayersPanel />
          </aside>
        </div>
        <div className="flex h-[28px] shrink-0 items-center bg-gradient-to-b from-[#c9c9c9] to-[#d2d2d2] pt-[2px] text-[11px] text-[#333]">
          <List size={13} strokeWidth={1.3} className="ml-[5px]" />
          <span className="ml-[3px]">Command: ExtrudeCrv</span>
          <span className="ml-auto">Millimeters</span>
          <span className="ml-[18px] flex h-4 w-[70px] items-center justify-between rounded-[3px] border border-[#888] pl-[5px] pr-[3px]">
            CPlane
            <Updown className="text-[#888]" />
          </span>
          <span className="ml-[15px] w-[82px]">X: -56.229</span>
          <span className="w-[86px]">Y: 5.355</span>
          <span className="w-[185px]">Z: 0.000</span>
        </div>
      </div>
    </div>
  );
}
